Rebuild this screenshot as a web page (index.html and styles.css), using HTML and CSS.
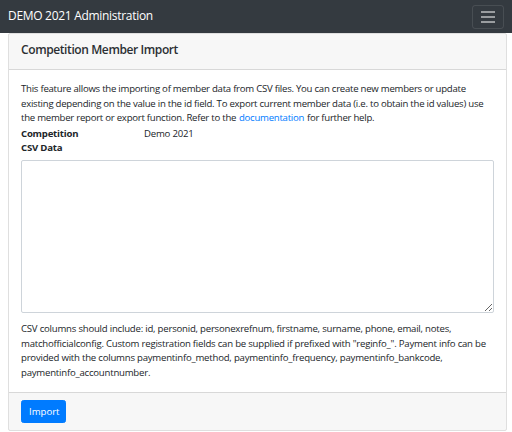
FILE: index.html
```html
<!DOCTYPE html>
<html lang="en">
<head>
    <meta charset="UTF-8">
    <meta name="viewport" content="width=device-width, initial-scale=1.0">
    <title>DEMO 2021 Administration</title>
    <link rel="stylesheet" href="styles.css">
</head>
<body>
    <nav class="navbar">
        <span class="brand">DEMO 2021 Administration</span>
        <button class="toggler" aria-label="Menu">
            <span class="toggler-bar"></span>
            <span class="toggler-bar"></span>
            <span class="toggler-bar"></span>
        </button>
    </nav>

    <div class="page">
        <div class="card">
            <div class="card-header">
                <h5>Competition Member Import</h5>
            </div>
            <div class="card-body">
                <p class="intro">This feature allows the importing of member data from CSV files. You can create new members or update existing depending on the value in the id field. To export current member data (i.e. to obtain the id values) use the member report or export function. Refer to the <a href="#">documentation</a> for further help.</p>
                <div class="field-row">
                    <label>Competition</label>
                    <span>Demo 2021</span>
                </div>
                <div class="field-row">
                    <label>CSV Data</label>
                </div>
                <textarea class="csv-input"></textarea>
                <p class="help">CSV columns should include: id, personid, personexrefnum, firstname, surname, phone, email, notes, matchofficialconfig. Custom registration fields can be supplied if prefixed with "reginfo_". Payment info can be provided with the columns paymentinfo_method, paymentinfo_frequency, paymentinfo_bankcode, paymentinfo_accountnumber.</p>
            </div>
            <div class="card-footer">
                <button class="btn-primary">Import</button>
            </div>
        </div>
    </div>
</body>
</html>
```

FILE: styles.css
```css
* {
    margin: 0;
    padding: 0;
    box-sizing: border-box;
}

body {
    font-family: "Segoe UI", "Open Sans", Arial, sans-serif;
    font-size: 9.6px;
    line-height: 14.4px;
    letter-spacing: -0.22px;
    color: #212529;
    background: #fff;
}

.navbar {
    background: #343a40;
    height: 33px;
    display: flex;
    align-items: center;
    justify-content: space-between;
    padding: 0 8px;
}

.brand {
    color: #fff;
    font-size: 12px;
    letter-spacing: -0.3px;
}

.toggler {
    width: 32px;
    height: 24px;
    background: transparent;
    border: 1px solid rgba(255, 255, 255, 0.1);
    border-radius: 3px;
    display: flex;
    flex-direction: column;
    align-items: center;
    justify-content: center;
    gap: 3px;
}

.toggler-bar {
    display: block;
    width: 14px;
    height: 2px;
    background: rgba(255, 255, 255, 0.5);
}

.page {
    padding: 0 5px 0 8px;
}

.card {
    border: 1px solid rgba(0, 0, 0, 0.125);
    border-radius: 2px;
}

.card-header {
    background: rgba(0, 0, 0, 0.03);
    border-bottom: 1px solid rgba(0, 0, 0, 0.125);
    padding: 7px 12px 8px;
}

.card-header h5 {
    font-size: 12px;
    font-weight: 600;
    line-height: 14.4px;
    letter-spacing: -0.4px;
    color: #2b2f33;
    margin: 2px 0 4px;
}

.card-body {
    padding: 12px 12px;
}

.intro {
    margin-bottom: 1px;
    letter-spacing: -0.25px;
}

.intro a {
    color: #007bff;
    text-decoration: none;
    padding: 0 0.5px;
}

.field-row {
    display: flex;
}

.field-row label {
    font-weight: 700;
    width: 123px;
}

.csv-input {
    display: block;
    width: 100%;
    height: 153px;
    margin: 5px 0 9px;
    border: 1px solid #ced4da;
    border-radius: 2px;
    font: inherit;
}

.card-footer {
    background: rgba(0, 0, 0, 0.03);
    border-top: 1px solid rgba(0, 0, 0, 0.125);
    padding: 7px 12px;
}

.btn-primary {
    background: #007bff;
    color: #fff;
    border: 1px solid #007bff;
    border-radius: 2.5px;
    font: inherit;
    padding: 4px 7px;
    height: 23px;
    width: 45px;
}
```
